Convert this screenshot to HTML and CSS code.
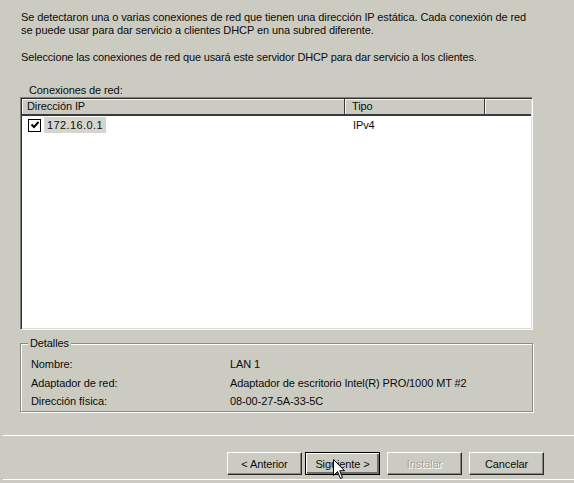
FILE: index.html
```html
<!DOCTYPE html>
<html lang="es">
<head>
<meta charset="utf-8">
<title>Conexiones de red</title>
<link rel="stylesheet" href="styles.css">
</head>
<body>
<div class="page">
  <p class="intro">Se detectaron una o varias conexiones de red que tienen una dirección IP estática. Cada conexión de red<br>se puede usar para dar servicio a clientes DHCP en una subred diferente.</p>
  <p class="intro second">Seleccione las conexiones de red que usará este servidor DHCP para dar servicio a los clientes.</p>
  <div class="list-label">Conexiones de red:</div>
  <div class="list">
    <div class="list-head">
      <div class="th c1">Dirección IP</div>
      <div class="th c2">Tipo</div>
      <div class="th c3"></div>
    </div>
    <div class="row">
      <div class="cell c1">
        <span class="chk"><svg width="10" height="10" viewBox="0 0 10 10"><path d="M1.5 4.5 L4 7 L8.5 2" fill="none" stroke="#000" stroke-width="2"/></svg></span>
        <span class="sel">172.16.0.1</span>
      </div>
      <div class="cell c2">IPv4</div>
    </div>
  </div>
  <div class="details">
    <span class="legend">Detalles</span>
    <div class="drow"><span class="dl">Nombre:</span><span class="dv">LAN 1</span></div>
    <div class="drow"><span class="dl">Adaptador de red:</span><span class="dv">Adaptador de escritorio Intel(R) PRO/1000 MT #2</span></div>
    <div class="drow"><span class="dl">Dirección física:</span><span class="dv">08-00-27-5A-33-5C</span></div>
  </div>
</div>
<div class="footer">
  <div class="buttons">
    <button class="btn">&lt; Anterior</button>
    <button class="btn focus"><span class="focus-ring">Siguiente &gt;</span></button>
    <button class="btn disabled gap">Instalar</button>
    <button class="btn gap">Cancelar</button>
  </div>
  <svg class="cursor" width="13" height="21" viewBox="0 0 13 21"><path d="M0.5 0.5 L0.5 16.5 L4.5 12.5 L7.5 19.5 L9.5 18.5 L6.7 11.7 L11.5 11.7 Z" fill="#fff" stroke="#000" stroke-width="1"/></svg>
</div>
</body>
</html>
```
FILE: styles.css
```css
html, body {
  margin: 0;
  padding: 0;
}
body {
  width: 574px;
  height: 483px;
  overflow: hidden;
  background: #cbcbc1;
  font-family: "Liberation Sans", Arial, sans-serif;
  font-size: 11px;
  line-height: 13px;
  letter-spacing: -0.1px;
  color: #0c0c0c;
}
.page {
  margin-left: 20px;
  width: 513px;
  padding-top: 11px;
}
.intro {
  margin: 0;
  padding-left: 1px;
  white-space: nowrap;
}
.intro.second {
  margin-top: 14px;
  letter-spacing: -0.15px;
}
.list-label {
  margin-top: 20px;
  padding-left: 9px;
  height: 13px;
}
.list {
  margin-top: 0;
  height: 233px;
  box-sizing: border-box;
  background: #fff;
  border-top: 1px solid #808080;
  border-left: 1px solid #808080;
  border-right: 1px solid #fff;
  border-bottom: 1px solid #fff;
  box-shadow: inset 1px 1px 0 #303030, inset -1px -1px 0 #dcdcd4;
  padding: 1px;
  display: flex;
  flex-direction: column;
}
.list-head {
  display: flex;
  height: 17px;
  box-sizing: border-box;
  background: #cbcbc1;
  border-bottom: 2px solid #3a3a3a;
}
.th {
  box-sizing: border-box;
  height: 15px;
  line-height: 15px;
  padding-left: 5px;
  border-right: 1px solid #3a3a3a;
  box-shadow: inset 1px 1px 0 #f4f4ee;
}
.list-head .c1 { width: 323px; }
.list-head .c2 { width: 140px; padding-left: 7px; }
.list-head .c3 { flex: 1; border-right: none; }
.row {
  display: flex;
  height: 18px;
  align-items: center;
}
.cell.c1 {
  width: 323px;
  display: flex;
  align-items: center;
  padding-left: 6px;
  box-sizing: border-box;
}
.cell.c2 {
  padding-left: 8px;
}
.chk {
  width: 11px;
  height: 11px;
  border: 1px solid #000;
  background: #fff;
  display: flex;
  align-items: center;
  justify-content: center;
}
.sel {
  margin-left: 3px;
  padding: 0 3px;
  height: 16px;
  line-height: 16px;
  background: #d6d5cd;
  letter-spacing: 0.4px;
  width: 56px;
}
.details {
  position: relative;
  margin-top: 13px;
  height: 69px;
  box-sizing: border-box;
  border: 1px solid #8a8a84;
  box-shadow: 1px 1px 0 #fff, inset 1px 1px 0 #fff;
  padding: 11px 0 0 10px;
}
.legend {
  position: absolute;
  top: -7px;
  left: 7px;
  padding: 0 2px;
  background: #cbcbc1;
  line-height: 13px;
}
.drow {
  display: flex;
  height: 18.5px;
  line-height: 18.5px;
}
.dl {
  width: 199px;
}
.footer {
  position: relative;
  margin-top: 23px;
  margin-left: 3px;
  border-top: 1px solid #fff;
  height: 43px;
  border-bottom: 1px solid #fff;
}
.buttons {
  display: flex;
  padding-left: 224px;
  padding-top: 16px;
}
.btn {
  width: 75px;
  height: 23px;
  box-sizing: border-box;
  font-family: "Liberation Sans", Arial, sans-serif;
  font-size: 11px;
  letter-spacing: -0.1px;
  color: #0c0c0c;
  background: #cbcbc1;
  border-top: 1px solid #fff;
  border-left: 1px solid #fff;
  border-right: 1px solid #2a2a2a;
  border-bottom: 1px solid #2a2a2a;
  box-shadow: inset -1px -1px 0 #85857f;
  padding: 0;
  margin: 0;
  display: flex;
  align-items: center;
  justify-content: center;
}
.btn.focus {
  margin-left: 3px;
  border: 1px solid #000;
  box-shadow: inset 1px 1px 0 #fff, inset -2px -2px 0 #6e6e68;
}
.btn.gap {
  margin-left: 7px;
}
.btn.disabled {
  color: #a3a39b;
  text-shadow: 1px 1px 0 #fff;
}
.focus-ring {
  padding: 0 2px;
}
.cursor {
  position: absolute;
  left: 330px;
  top: 23px;
}
```
